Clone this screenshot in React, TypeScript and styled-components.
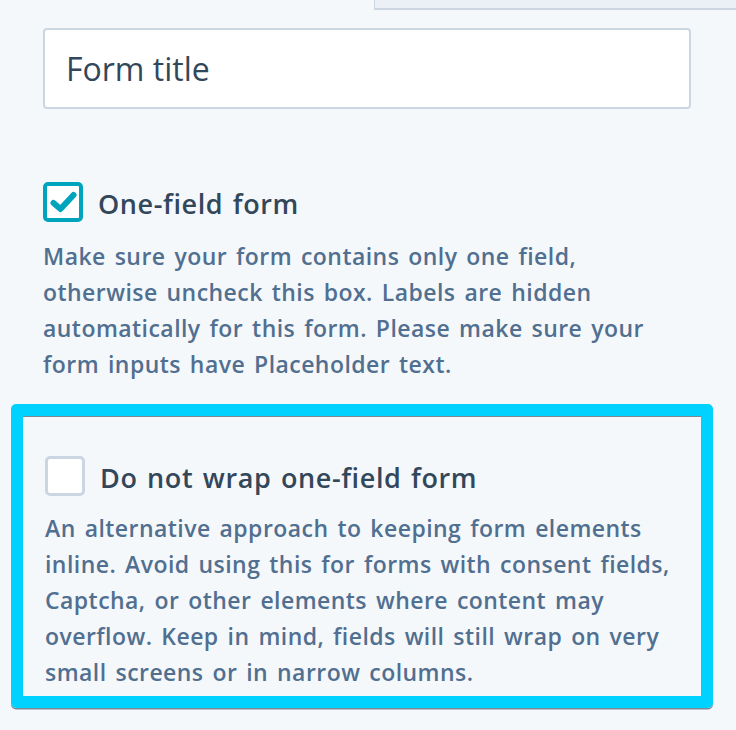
import styled, { createGlobalStyle } from "styled-components";

const GlobalStyle = createGlobalStyle`
  html, body {
    margin: 0;
    padding: 0;
    background: #f5f8fa;
    font-family: "Open Sans", "Noto Sans", sans-serif;
  }
`;

const Page = styled.div`
  width: 736px;
  height: 730px;
  overflow: hidden;
  display: flex;
  flex-direction: column;
`;

// the bottom of a panel that is cut off at the top of the view
const TopPanel = styled.div`
  align-self: flex-end;
  width: 361px;
  height: 9px;
  margin-top: -1px;
  background-color: #eaf0f6;
  background-image: radial-gradient(#dde6ef 0.6px, transparent 0.7px);
  background-size: 4px 4px;
  border-left: 1px solid #cbd6e2;
  border-bottom: 2px solid #cbd6e2;
`;

const Content = styled.div`
  padding: 18px 45px 0 43px;
`;

const TitleInput = styled.div`
  box-sizing: border-box;
  height: 81px;
  width: 648px;
  display: flex;
  align-items: center;
  padding: 0 21px 0;
  background: #fff;
  border: 2px solid #cbd6e2;
  border-radius: 4px;
  font-weight: 400;
  font-size: 32px;
  color: #33475b;
`;

const Option = styled.div`
  display: flex;
  flex-direction: column;
`;

const OptionRow = styled.div`
  display: flex;
  align-items: center;
  gap: 15px;
`;

const Box = styled.span<{ $checked?: boolean }>`
  box-sizing: border-box;
  width: 40px;
  height: 40px;
  flex: none;
  display: flex;
  align-items: center;
  justify-content: center;
  background: #fff;
  border-radius: 5px;
  border: ${(p) => (p.$checked ? "4px solid #00a4bd" : "3px solid #cbd6e2")};
`;

const OptionTitle = styled.span`
  font-size: 27px;
  font-weight: 600;
  color: #33475b;
  letter-spacing: 0.6px;
  word-spacing: 2px;
  padding-top: 3px;
`;

const OptionHelp = styled.p`
  margin: 16px 0 0;
  font-size: 23px;
  line-height: 36px;
  font-weight: 600;
  color: #516f90;
  letter-spacing: 0.45px;
  word-spacing: 2.5px;
`;

const FirstOption = styled(Option)`
  margin-top: 73px;
`;

const Highlight = styled.div`
  margin: 22px 23px 0 11px;
  border: 12px solid #00d2ff;
  border-radius: 5px;
  box-shadow: 0 1.5px 0 #7c8896;
`;

const HighlightInner = styled.div`
  border-top: 1.5px solid #7c8896;
  padding: 39px 18px 6px 22px;
`;

const SecondHelp = styled(OptionHelp)`
  margin-top: 14px;
`;

const Check = () => (
  <svg width="27" height="22" viewBox="0 0 27 22">
    <path
      d="M3.5 12 L10.5 18 L23.5 4"
      fill="none"
      stroke="#00a4bd"
      strokeWidth="6"
      strokeLinecap="round"
      strokeLinejoin="round"
    />
  </svg>
);

export default function App() {
  return (
    <Page>
      <GlobalStyle />
      <TopPanel />
      <Content>
        <TitleInput>Form title</TitleInput>
        <FirstOption>
          <OptionRow>
            <Box $checked>
              <Check />
            </Box>
            <OptionTitle>One-field form</OptionTitle>
          </OptionRow>
          <OptionHelp>
            Make sure your form contains only one field, otherwise uncheck this
            box. Labels are hidden automatically for this form. Please make sure
            your form inputs have Placeholder text.
          </OptionHelp>
        </FirstOption>
      </Content>
      <Highlight>
        <HighlightInner>
          <Option>
            <OptionRow>
              <Box />
              <OptionTitle>Do not wrap one-field form</OptionTitle>
            </OptionRow>
            <SecondHelp>
              An alternative approach to keeping form elements inline. Avoid
              using this for forms with consent fields, Captcha, or other
              elements where content may overflow. Keep in mind, fields will
              still wrap on very small screens or in narrow columns.
            </SecondHelp>
          </Option>
        </HighlightInner>
      </Highlight>
    </Page>
  );
}
